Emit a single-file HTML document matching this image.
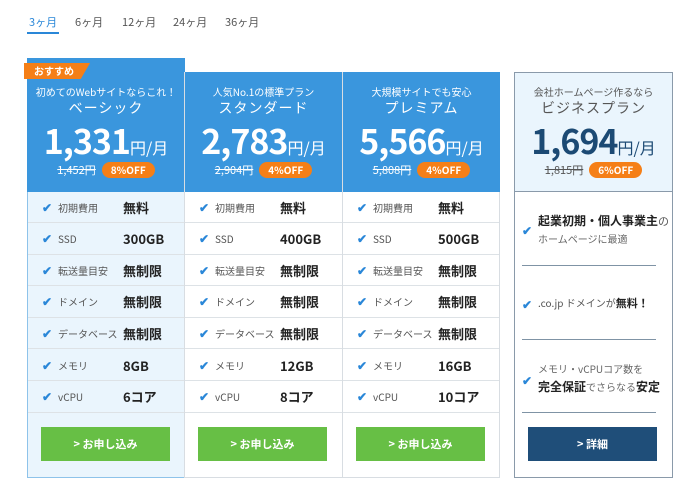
<!DOCTYPE html>
<html><head><meta charset="utf-8"><style>
*{margin:0;padding:0;box-sizing:border-box}
body{width:680px;height:476px;background:#fff;font-family:"Noto Sans CJK JP","Liberation Sans",sans-serif;position:relative;overflow:hidden;color:#333}
.tab{position:absolute;top:14px;font-size:11px;color:#555;line-height:16px}
.card{position:absolute;border:1px solid #d8dde2}
.hd{position:absolute;left:0;right:0;background:#3a96dd;color:#fff;text-align:center}
.sub{position:absolute;left:0;right:0;top:0;font-size:10px;line-height:14px}
.ttl{position:absolute;left:0;right:0;font-size:14px;letter-spacing:1px;line-height:18px}
.price{position:absolute;left:0;right:0;font-size:34px;font-weight:bold;line-height:40px;letter-spacing:-1px}
.price small{font-size:16px;font-weight:normal;letter-spacing:0}
.old{position:absolute;left:0;right:0;font-size:11px;line-height:16px}
.old s{margin-right:6px}
.off{display:inline-block;background:#f57f17;color:#fff;border-radius:9px;padding:0 9px;font-weight:bold;font-size:10px;line-height:16px}
.row{position:absolute;left:0;right:0;height:31px;border-bottom:1px solid #dde2e6;font-size:10px;color:#555;display:flex;align-items:center}
.row .ck{width:30px;padding-left:14px;color:#2a87d8;font-size:12px;font-weight:bold}
.row .k{width:65px}
.row .v{font-size:13px;font-weight:bold;color:#222}
.btn{position:absolute;height:34px;background:#67bf45;color:#fff;font-size:11px;font-weight:bold;text-align:center;line-height:34px}
</style></head><body>
<div class="tab" style="left:29px;color:#2a87d8">3ヶ月</div>
<div style="position:absolute;left:27px;top:32px;width:32px;height:2px;background:#2a87d8"></div>
<div class="tab" style="left:75px">6ヶ月</div>
<div class="tab" style="left:122px">12ヶ月</div>
<div class="tab" style="left:173px">24ヶ月</div>
<div class="tab" style="left:225px">36ヶ月</div>

<div class="card" style="left:27px;top:58px;width:158px;height:420px;background:#eaf5fd;border-color:#8ec3ea"></div>
<div class="hd" style="left:27px;width:158px;top:58px;height:134px;position:absolute">
 <div style="position:absolute;left:-3px;top:5px;width:66px;height:16px;background:#f57f17;clip-path:polygon(0 0,100% 0,86% 100%,0 100%);color:#fff;font-size:10px;font-weight:bold;line-height:16px;padding-left:10px;text-align:left">おすすめ</div>
 <div class="sub" style="top:27px">初めてのWebサイトならこれ！</div>
 <div class="ttl" style="top:41px">ベーシック</div>
 <div class="price" style="top:62px">1,331<small>円/月</small></div>
 <div class="old" style="top:104px"><s>1,452円</s><span class="off">8%OFF</span></div>
</div>

<div class="card" style="left:184px;top:72px;width:159px;height:406px"></div>
<div class="hd" style="left:185px;width:157px;top:72px;height:120px;position:absolute">
 <div class="sub" style="top:13px">人気No.1の標準プラン</div>
 <div class="ttl" style="top:27px">スタンダード</div>
 <div class="price" style="top:48px">2,783<small>円/月</small></div>
 <div class="old" style="top:90px"><s>2,904円</s><span class="off">4%OFF</span></div>
</div>

<div class="card" style="left:342px;top:72px;width:158px;height:406px"></div>
<div class="hd" style="left:343px;width:157px;top:72px;height:120px;position:absolute">
 <div class="sub" style="top:13px">大規模サイトでも安心</div>
 <div class="ttl" style="top:27px">プレミアム</div>
 <div class="price" style="top:48px">5,566<small>円/月</small></div>
 <div class="old" style="top:90px"><s>5,808円</s><span class="off">4%OFF</span></div>
</div>

<div id="rows"></div>

<div class="card" style="left:514px;top:72px;width:159px;height:406px;border-color:#8a9aaa"></div>
<div class="hd" style="left:515px;width:157px;top:73px;height:119px;position:absolute;background:#eaf5fd;color:#1c4a74;border-bottom:1px solid #8a9aaa">
 <div class="sub" style="top:12px;color:#555">会社ホームページ作るなら</div>
 <div class="ttl" style="top:26px;color:#555">ビジネスプラン</div>
 <div class="price" style="top:47px">1,694<small>円/月</small></div>
 <div class="old" style="top:89px;color:#555"><s>1,815円</s><span class="off">6%OFF</span></div>
</div>
<div style="position:absolute;left:522px;top:222px;color:#2a87d8;font-weight:bold;font-size:12px">✔</div>
<div style="position:absolute;left:538px;top:212px;font-size:12px;color:#222;line-height:18px"><b>起業初期・個人事業主</b><span style="color:#555;font-size:11px">の</span><br><span style="font-size:10px;color:#666">ホームページに最適</span></div>
<div style="position:absolute;left:522px;top:265px;width:134px;height:1px;background:#7f93a5"></div>
<div style="position:absolute;left:522px;top:296px;color:#2a87d8;font-weight:bold;font-size:12px">✔</div>
<div style="position:absolute;left:538px;top:295px;font-size:10px;color:#555">.co.jp ドメインが<b style="color:#222;font-size:11px">無料！</b></div>
<div style="position:absolute;left:522px;top:339px;width:134px;height:1px;background:#7f93a5"></div>
<div style="position:absolute;left:522px;top:372px;color:#2a87d8;font-weight:bold;font-size:12px">✔</div>
<div style="position:absolute;left:538px;top:360px;font-size:10px;color:#666;line-height:18px">メモリ・vCPUコア数を<br><b style="color:#222;font-size:12px">完全保証</b>でさらなる<b style="color:#222;font-size:12px">安定</b></div>
<div style="position:absolute;left:522px;top:412px;width:134px;height:1px;background:#7f93a5"></div>
<div class="btn" style="left:528px;top:427px;width:129px;background:#1f4e79">&gt; 詳細</div>

<script>
var cols=[[27,158,["300GB","8GB","6コア"]],[184,159,["400GB","12GB","8コア"]],[342,158,["500GB","16GB","10コア"]]];
var ks=["初期費用","SSD","転送量目安","ドメイン","データベース","メモリ","vCPU"];
var h="";
cols.forEach(function(c){
 var vs=["無料",c[2][0],"無制限","無制限","無制限",c[2][1],c[2][2]];
 for(var i=0;i<7;i++){
  h+='<div class="row" style="left:'+(c[0]+1)+'px;width:'+(c[1]-2)+'px;top:'+(192+i*31.6)+'px"><span class="ck">✔</span><span class="k">'+ks[i]+'</span><span class="v">'+vs[i]+'</span></div>';
 }
 h+='<div class="btn" style="left:'+(c[0]+14)+'px;top:427px;width:129px">&gt; お申し込み</div>';
});
document.getElementById("rows").innerHTML=h;
</script>
</body></html>
